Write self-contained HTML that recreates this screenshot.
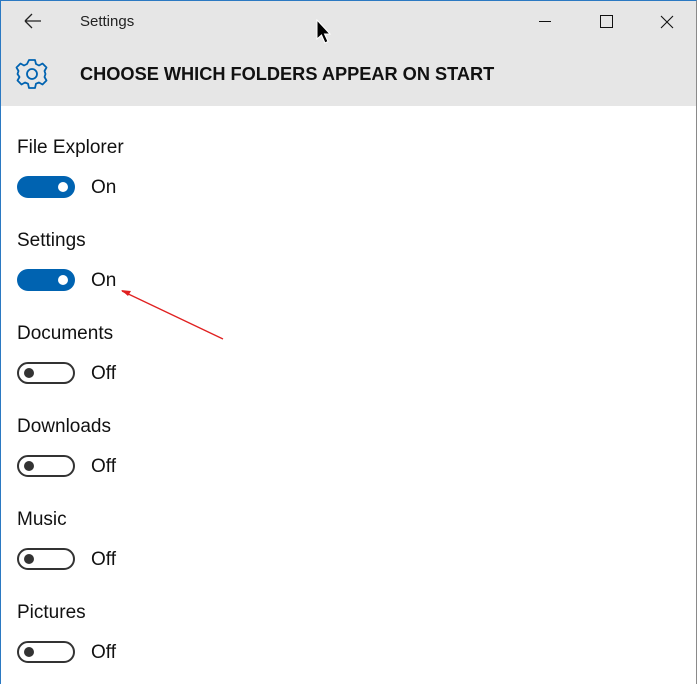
<!DOCTYPE html>
<html><head><style>
*{margin:0;padding:0;box-sizing:border-box}
body{width:700px;height:684px;background:#fff;font-family:"Liberation Sans",sans-serif;position:relative;overflow:hidden}
.win{position:absolute;left:0;top:0;width:697px;height:684px;border-left:1px solid #2b79c2;border-top:1px solid #2b79c2;border-right:1px solid #8a8a8a;background:#fff}
.hdr{position:absolute;left:1px;top:1px;width:695px;height:105px;background:#e6e6e6}
.t{position:absolute;color:#000}
.lbl{position:absolute;left:17px;font-size:19px;color:#111}
.tg{position:absolute;left:17px;width:58px;height:22px;border-radius:11px}
.on{background:#0063b1}
.on::after{content:"";position:absolute;right:7px;top:6px;width:10px;height:10px;border-radius:50%;background:#fff}
.off{border:2px solid #333;background:#fff}
.off::after{content:"";position:absolute;left:5px;top:4px;width:10px;height:10px;border-radius:50%;background:#333}
.st{position:absolute;left:91px;font-size:19px;color:#111}
</style></head><body>
<div class="win"></div>
<div class="hdr"></div>
<svg style="position:absolute;left:24px;top:13px" width="18" height="16"><path d="M1 8H17M1 8L8 1M1 8L8 15" stroke="#222" stroke-width="1.3" fill="none"/></svg>
<div class="t" style="left:80px;top:13px;font-size:15px;color:#222">Settings</div>
<svg style="position:absolute;left:316px;top:19px" width="16" height="26"><path d="M1 1V20L5.5 16L9 24L12 22.5L8.5 15H14Z" fill="#000" stroke="#fff" stroke-width="1"/></svg>
<div style="position:absolute;left:539px;top:21px;width:12px;height:1px;background:#111"></div>
<div style="position:absolute;left:600px;top:15px;width:13px;height:13px;border:1px solid #111"></div>
<svg style="position:absolute;left:660px;top:15px" width="14" height="14"><path d="M1 1L13 13M13 1L1 13" stroke="#111" stroke-width="1.1"/></svg>
<svg style="position:absolute;left:15px;top:57px" width="34" height="34" viewBox="0 0 34 34"><g fill="none" stroke="#0063b1" stroke-width="1.8"><path d="M14 3h6l1 4 3 1.5 3.5-2 4 4-2 3.5L30.5 17l-1 3 2 3.5-4 4-3.5-2-3 1.2-1 4.3h-6l-1-4.3-3-1.2-3.5 2-4-4 2-3.5L2.5 17l1-3-2-3.5 4-4 3.5 2L12 7z" stroke-linejoin="round"/><circle cx="17" cy="17" r="5"/></g></svg>
<div class="t" style="left:80px;top:64px;font-size:18.2px;font-weight:bold;color:#111">CHOOSE WHICH FOLDERS APPEAR ON START</div>

<div class="lbl" style="top:137px">File Explorer</div>
<div class="tg on" style="top:176px"></div><div class="st" style="top:177px">On</div>
<div class="lbl" style="top:230px">Settings</div>
<div class="tg on" style="top:269px"></div><div class="st" style="top:270px">On</div>
<div class="lbl" style="top:323px">Documents</div>
<div class="tg off" style="top:362px"></div><div class="st" style="top:363px">Off</div>
<div class="lbl" style="top:416px">Downloads</div>
<div class="tg off" style="top:455px"></div><div class="st" style="top:456px">Off</div>
<div class="lbl" style="top:509px">Music</div>
<div class="tg off" style="top:548px"></div><div class="st" style="top:549px">Off</div>
<div class="lbl" style="top:602px">Pictures</div>
<div class="tg off" style="top:641px"></div><div class="st" style="top:642px">Off</div>

<svg style="position:absolute;left:115px;top:285px" width="115" height="60"><path d="M7 6L108 54" stroke="#e02020" stroke-width="1.3"/><path d="M6 5L16 6L13 11Z" fill="#e02020"/></svg>
</body></html>
